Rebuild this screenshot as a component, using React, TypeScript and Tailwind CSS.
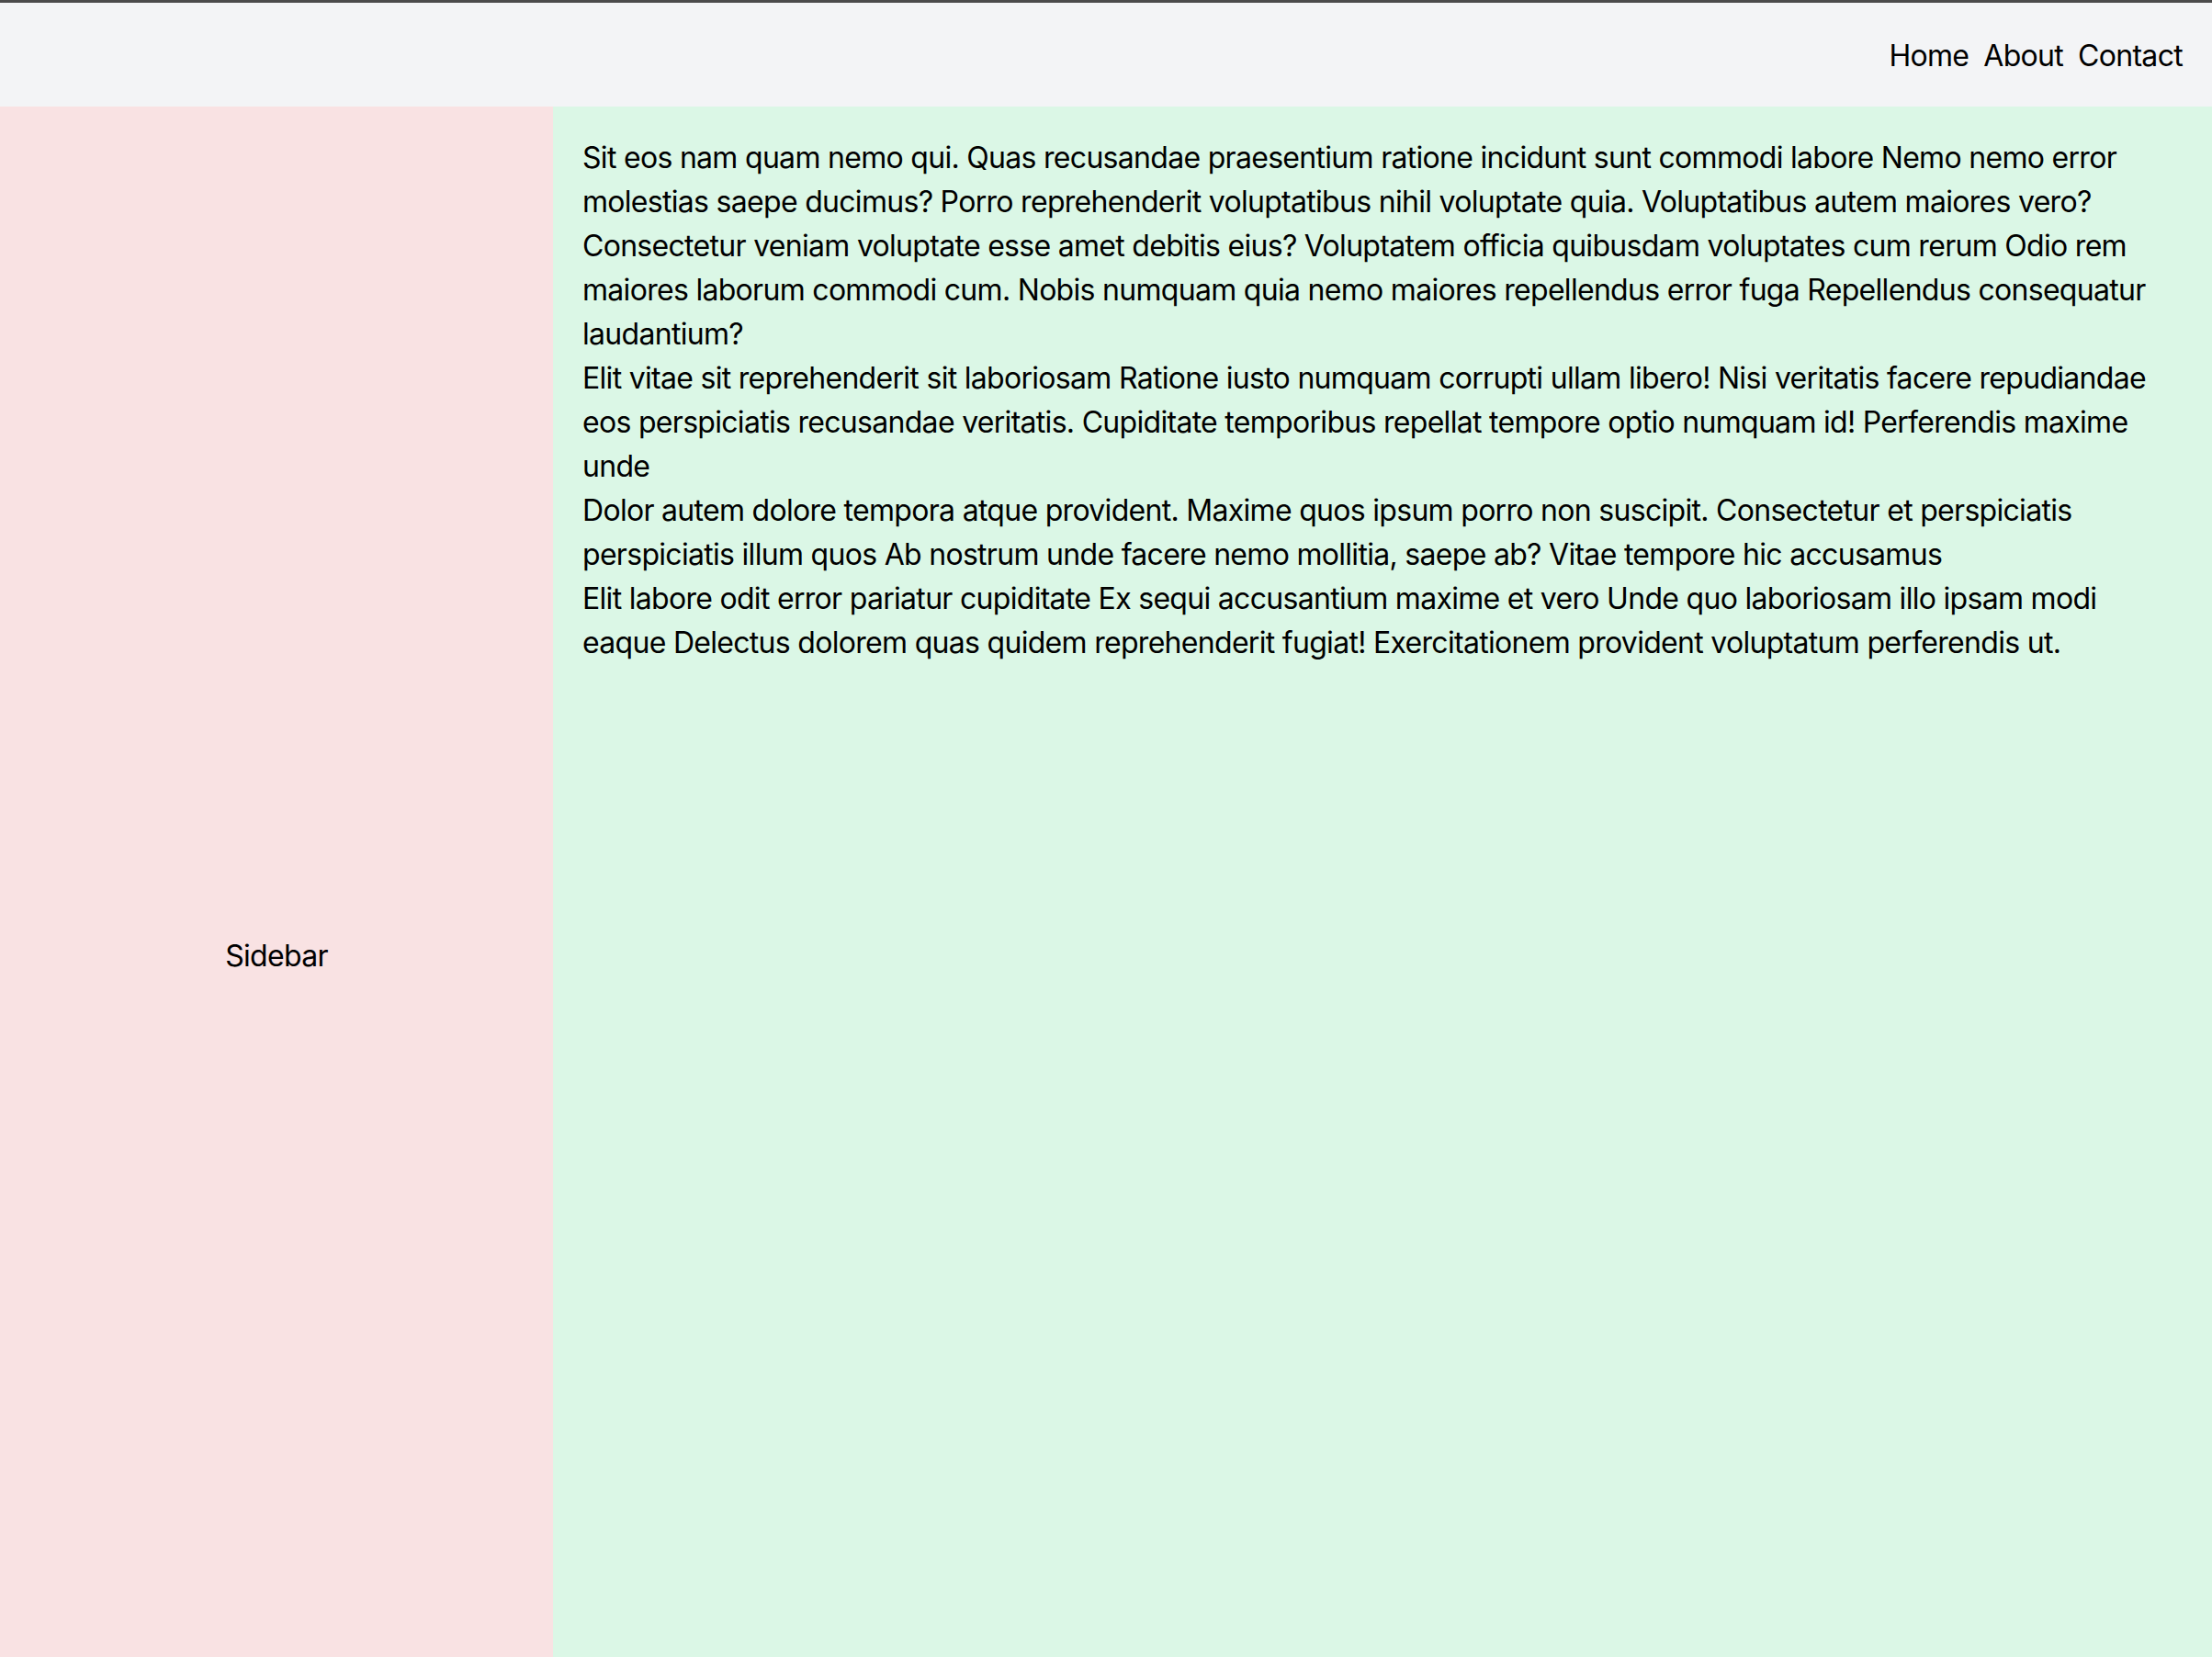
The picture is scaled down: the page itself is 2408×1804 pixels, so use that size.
import React from "react";

const paragraphs = [
  "Sit eos nam quam nemo qui. Quas recusandae praesentium ratione incidunt sunt commodi labore Nemo nemo error molestias saepe ducimus? Porro reprehenderit voluptatibus nihil voluptate quia. Voluptatibus autem maiores vero? Consectetur veniam voluptate esse amet debitis eius? Voluptatem officia quibusdam voluptates cum rerum Odio rem maiores laborum commodi cum. Nobis numquam quia nemo maiores repellendus error fuga Repellendus consequatur laudantium?",
  "Elit vitae sit reprehenderit sit laboriosam Ratione iusto numquam corrupti ullam libero! Nisi veritatis facere repudiandae eos perspiciatis recusandae veritatis. Cupiditate temporibus repellat tempore optio numquam id! Perferendis maxime unde",
  "Dolor autem dolore tempora atque provident. Maxime quos ipsum porro non suscipit. Consectetur et perspiciatis perspiciatis illum quos Ab nostrum unde facere nemo mollitia, saepe ab? Vitae tempore hic accusamus",
  "Elit labore odit error pariatur cupiditate Ex sequi accusantium maxime et vero Unde quo laboriosam illo ipsam modi eaque Delectus dolorem quas quidem reprehenderit fugiat! Exercitationem provident voluptatum perferendis ut.",
];

export default function App() {
  return (
    <div
      className="w-full text-black text-[32px] leading-[48px] tracking-[-0.7px]"
      style={{ fontFamily: "Inter, 'Noto Sans', sans-serif" }}
    >
      <header className="h-[116px] border-t-[3px] border-[#4b4b4b] bg-[#f3f4f6] flex items-center justify-end px-8 pt-[3px]">
        <nav className="flex gap-4">
          <a>Home</a>
          <a>About</a>
          <a>Contact</a>
        </nav>
      </header>
      <div className="flex h-[1850px]">
        <aside className="w-1/4 shrink-0 bg-[#f9e2e3] flex items-center justify-center">
          Sidebar
        </aside>
        <main className="flex-1 bg-[#dbf7e6] p-8">
          {paragraphs.map((p, i) => (
            <p key={i}>{p}</p>
          ))}
        </main>
      </div>
    </div>
  );
}
